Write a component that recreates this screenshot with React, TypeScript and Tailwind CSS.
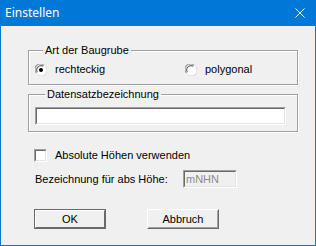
import React from "react";

const font = { fontFamily: '"Liberation Sans", Arial, sans-serif' };

function Radio({ checked }: { checked?: boolean }) {
  return (
    <svg width="12" height="12" viewBox="0 0 12 12" className="shrink-0">
      <circle cx="6" cy="6" r="5.5" fill="#ffffff" />
      <path d="M1.5 9 A5.3 5.3 0 0 1 9 1.5" fill="none" stroke="#a0a0a0" strokeWidth="1.2" />
      <path d="M2.4 8.2 A4.2 4.2 0 0 1 8.2 2.4" fill="none" stroke="#696969" strokeWidth="1.1" />
      <path d="M3 10.6 A5.3 5.3 0 0 0 10.6 3" fill="none" stroke="#d8d8d8" strokeWidth="1" />
      {checked && <circle cx="6" cy="6" r="2" fill="#000000" />}
    </svg>
  );
}

function Sunken({ className, children }: { className: string; children?: React.ReactNode }) {
  return (
    <div className={"border border-t-[#a0a0a0] border-l-[#a0a0a0] border-r-white border-b-white " + className}>
      <div className="h-full w-full border border-t-[#696969] border-l-[#696969] border-r-[#e3e3e3] border-b-[#e3e3e3]">
        {children}
      </div>
    </div>
  );
}

function Button({ label, def }: { label: string; def?: boolean }) {
  return (
    <div
      className={
        "w-[72px] h-[20px] border " +
        (def ? "border-[#696969] " : "border-t-white border-l-white border-r-[#696969] border-b-[#696969] ")
      }
    >
      <div
        className={
          "h-full w-full flex items-center justify-center text-[11px] text-black border " +
          (def
            ? "border-t-white border-l-white border-r-[#696969] border-b-[#696969]"
            : "border-t-[#f0f0f0] border-l-[#f0f0f0] border-r-[#a0a0a0] border-b-[#a0a0a0]")
        }
      >
        {label}
      </div>
    </div>
  );
}

export default function App() {
  return (
    <div className="w-[316px] h-[246px] bg-[#f0f0f0] flex flex-col overflow-hidden" style={font}>
      <div className="h-[26px] bg-[#0078d7] flex items-center justify-between pl-[5px] pr-[11px] shrink-0">
        <span className="text-white text-[12px] leading-none" style={{ fontFamily: '"Noto Sans", "Liberation Sans", sans-serif' }}>
          Einstellen
        </span>
        <svg width="10" height="10" viewBox="0 0 10 10">
          <path d="M0.5 0.5 L9.5 9.5 M9.5 0.5 L0.5 9.5" stroke="#ffffff" strokeWidth="1" />
        </svg>
      </div>
      <div className="flex-1 border-x border-b border-[#0078d7] flex flex-col pl-[27px] text-[11px] text-black">
        <fieldset className="mt-[18px] w-[270px] border border-[#a0a0a0] shadow-[inset_1px_1px_0_#fff,1px_1px_0_#fff] pl-[6px] pb-[8px]">
          <legend className="ml-[8px] px-[2px] leading-[12px]">Art der Baugrube</legend>
          <div className="flex items-center h-[13px] mt-[7px]">
            <Radio checked />
            <span className="ml-[8px] w-[130px]">rechteckig</span>
            <Radio />
            <span className="ml-[8px]">polygonal</span>
          </div>
        </fieldset>
        <fieldset className="mt-[3px] w-[270px] border border-[#a0a0a0] shadow-[inset_1px_1px_0_#fff,1px_1px_0_#fff] pl-[6px] pb-[6px]">
          <legend className="ml-[10px] px-[2px] leading-[12px]">Datensatzbezeichnung</legend>
          <Sunken className="mt-[7px] w-[251px] h-[18px] bg-white" />
        </fieldset>
        <div className="flex items-center mt-[17px] ml-[6px] h-[13px]">
          <Sunken className="w-[13px] h-[13px] bg-white" />
          <span className="ml-[8px]">Absolute Höhen verwenden</span>
        </div>
        <div className="flex items-center mt-[8px] ml-[7px] h-[18px]">
          <span className="w-[148px]">Bezeichnung für abs Höhe:</span>
          <Sunken className="w-[54px] h-[18px]">
            <div className="pl-[1px] leading-[14px] text-[#8a8a8a]">mNHN</div>
          </Sunken>
        </div>
        <div className="flex mt-[21px] ml-[6px] gap-[41px]">
          <Button label="OK" def />
          <Button label="Abbruch" />
        </div>
      </div>
    </div>
  );
}
